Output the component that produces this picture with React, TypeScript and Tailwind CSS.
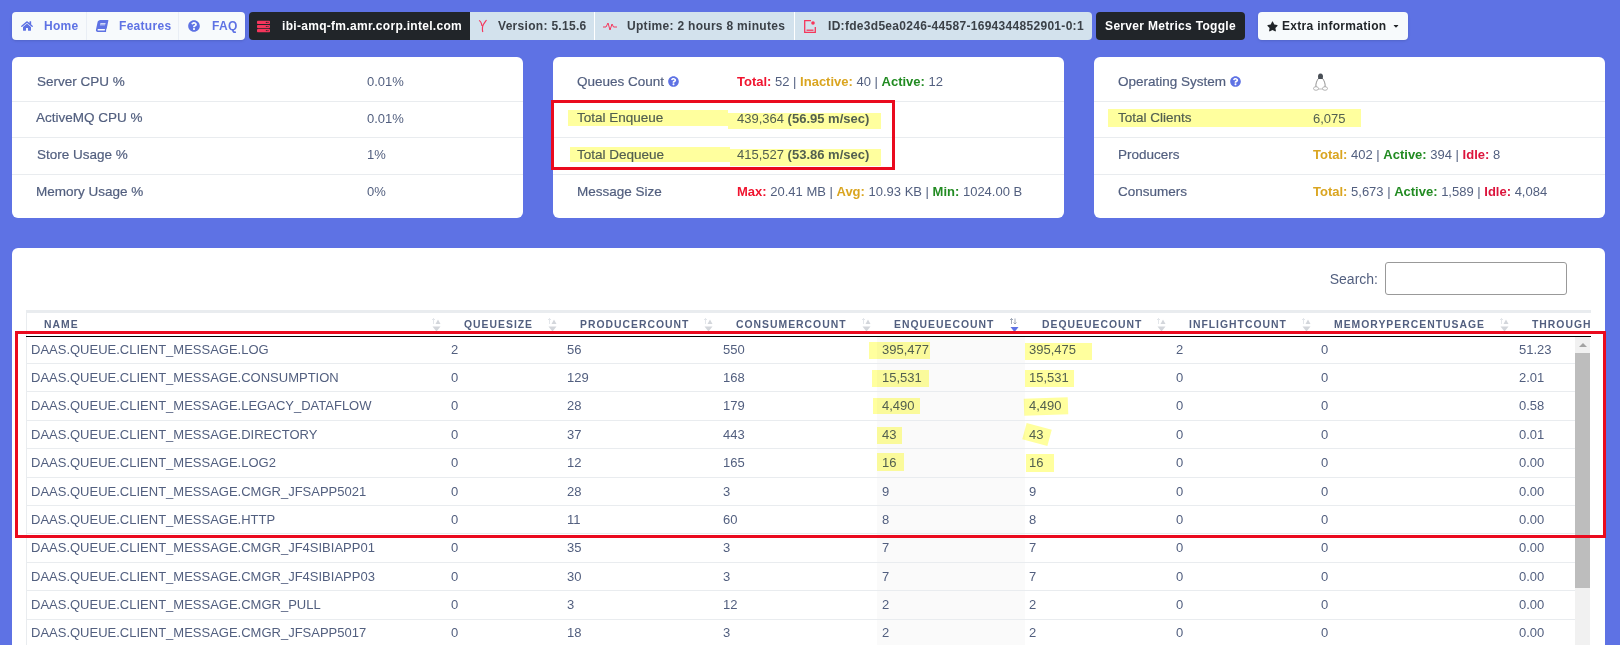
import { ReactNode } from 'react';
import { FaBook, FaCaretDown, FaHome, FaQuestionCircle, FaServer, FaStar } from 'react-icons/fa';

const headers = [
  'Name',
  'QueueSize',
  'ProducerCount',
  'ConsumerCount',
  'EnqueueCount',
  'DequeueCount',
  'InFlightCount',
  'MemoryPercentUsage',
  'Throughput',
];

const rows = [
  ['LOG', '2', '56', '550', '395,477', '395,475', '2', '0', '51.23'],
  ['CONSUMPTION', '0', '129', '168', '15,531', '15,531', '0', '0', '2.01'],
  ['LEGACY_DATAFLOW', '0', '28', '179', '4,490', '4,490', '0', '0', '0.58'],
  ['DIRECTORY', '0', '37', '443', '43', '43', '0', '0', '0.01'],
  ['LOG2', '0', '12', '165', '16', '16', '0', '0', '0.00'],
  ['CMGR_JFSAPP5021', '0', '28', '3', '9', '9', '0', '0', '0.00'],
  ['HTTP', '0', '11', '60', '8', '8', '0', '0', '0.00'],
  ['CMGR_JF4SIBIAPP01', '0', '35', '3', '7', '7', '0', '0', '0.00'],
  ['CMGR_JF4SIBIAPP03', '0', '30', '3', '7', '7', '0', '0', '0.00'],
  ['CMGR_PULL', '0', '3', '12', '2', '2', '0', '0', '0.00'],
  ['CMGR_JFSAPP5017', '0', '18', '3', '2', '2', '0', '0', '0.00'],
];

function SortIcon({ active }: { active?: boolean }) {
  const arrow = active ? '#8a94a6' : '#dcdfe4';
  return (
    <svg width="11" height="14" viewBox="0 0 11 14" className="shrink-0">
      <path d="M2.5 6V0.5M1 2L2.5 0.5L4 2" fill="none" stroke={arrow} strokeWidth="0.8" />
      {active ? (
        <>
          <path d="M6 0.5V6M4.5 4.5L6 6L7.5 4.5" fill="none" stroke={arrow} strokeWidth="0.8" />
          <path d="M1.5 9H9.5L5.5 14Z" fill="#5e72e4" />
        </>
      ) : (
        <>
          <path d="M7 1.5L9.5 6H4.5Z" fill="#d3d6db" />
          <path d="M1.5 8.5H9.5L5.5 13.5Z" fill="#d3d6db" />
        </>
      )}
    </svg>
  );
}

function Row({ label, children, labelClass }: { label: ReactNode; children: ReactNode; labelClass: string }) {
  return (
    <div className="flex h-[36.5px] items-center border-b border-[#e9ecef] pb-[2px] last:border-b-0">
      <div className={labelClass}>{label}</div>
      <div className="whitespace-nowrap">{children}</div>
    </div>
  );
}

function Help() {
  return <FaQuestionCircle className="ml-[4px] inline-block h-[11px] w-[11px] align-[-1px] text-[#5e72e4]" />;
}

function Tux() {
  return (
    <svg width="15" height="19" viewBox="0 0 15 19" className="mt-[1px]">
      <path d="M7.5 0.5C5.5 0.5 5 2 5 3.5C5 4.5 5.5 5 5 6H10C9.5 5 10 4.5 10 3.5C10 2 9.5 0.5 7.5 0.5Z" fill="#4a4f57" />
      <path d="M5 6C3.5 8.5 2.5 11 3 14M10 6C11.5 8.5 12.5 11 12 14" fill="none" stroke="#777" strokeWidth="0.8" />
      <path d="M4 16H11" stroke="#aaa" strokeWidth="0.8" />
      <ellipse cx="3" cy="15.5" rx="2.5" ry="1.8" fill="#fff" stroke="#999" strokeWidth="0.7" />
      <ellipse cx="12" cy="15.5" rx="2.5" ry="1.8" fill="#fff" stroke="#999" strokeWidth="0.7" />
    </svg>
  );
}

export default function App() {
  return (
    <div className="relative h-[645px] w-[1620px] overflow-hidden bg-[#5e72e4] text-[13px] text-[#525f7f] [font-family:'Liberation_Sans',Arial,sans-serif]">
      {/* top nav */}
      <nav className="mt-3 flex h-[28px] pl-3 text-xs font-bold tracking-[0.3px]">
        <div className="flex w-[233px] overflow-hidden rounded-[4px] bg-[#f7fafc] text-[#5e72e4] shadow-sm">
          <a className="flex w-[75px] items-center border-r border-[#e9eef5] pl-[9px]">
            <FaHome className="h-[12px] w-[12px]" />
            <span className="ml-[11px]">Home</span>
          </a>
          <a className="flex w-[92px] items-center border-r border-[#e9eef5] pl-[9px]">
            <FaBook className="h-[12px] w-[12px] -skew-x-12" />
            <span className="ml-[11px]">Features</span>
          </a>
          <a className="flex flex-1 items-center pl-[9px]">
            <FaQuestionCircle className="h-[12px] w-[12px]" />
            <span className="ml-[12px]">FAQ</span>
          </a>
        </div>
        <div className="ml-[4px] flex w-[221px] items-center rounded-l-[4px] bg-[#212529] pl-[8px] text-white">
          <FaServer className="h-[13px] w-[13px] text-[#f5365c]" />
          <span className="ml-[12px] whitespace-nowrap">ibi-amq-fm.amr.corp.intel.com</span>
        </div>
        <div className="flex w-[622px] rounded-r-[4px] bg-[#d3e2ed] font-normal text-[#343a40] [&>div]:border-r [&>div]:border-white">
          <div className="flex w-[125px] items-center pl-[8px]">
            <svg width="10" height="14" viewBox="0 0 10 14" fill="none" stroke="#f5365c" strokeWidth="1.2">
              <path d="M1 1.5C2.5 2 3.5 4 4 7M8.5 1C7 3 5 5 4.5 8C4.3 10 4.5 12 4.8 13" />
            </svg>
            <span className="ml-[10px] font-bold text-[#3b4148]">Version: 5.15.6</span>
          </div>
          <div className="flex w-[200px] items-center pl-[8px]">
            <svg width="14" height="10" viewBox="0 0 14 10" fill="none" stroke="#f5365c" strokeWidth="1">
              <path d="M0 6H3L5 2L7 9L9 3L10.5 6H14" />
            </svg>
            <span className="ml-[10px] font-bold text-[#3b4148]">Uptime: 2 hours 8 minutes</span>
          </div>
          <div className="flex flex-1 items-center !border-r-0 pl-[9px]">
            <svg width="12" height="13" viewBox="0 0 12 13" fill="none" stroke="#f5365c" strokeWidth="1.3">
              <path d="M7 0.7H0.7V12.3H11.3V7" />
              <path d="M2.5 10.2H9.5" />
              <circle cx="9" cy="3" r="1.8" fill="#f5365c" stroke="none" />
            </svg>
            <span className="ml-[12px] whitespace-nowrap font-bold text-[#3b4148]">ID:fde3d5ea0246-44587-1694344852901-0:1</span>
          </div>
        </div>
        <button className="ml-[4px] w-[149px] rounded-[4px] bg-[#212529] text-white">Server Metrics Toggle</button>
        <button className="ml-[13px] flex w-[150px] items-center rounded-[4px] bg-[#f7fafc] pl-[9px] text-[#212529] shadow-sm">
          <FaStar className="h-[11px] w-[11px]" />
          <span className="ml-[4px]">Extra information</span>
          <FaCaretDown className="ml-[6px] h-[8px] w-[8px]" />
        </button>
      </nav>

      {/* metric cards */}
      <div className="ml-3 mt-[17px] flex w-[1593px] justify-between">
        <div className="h-[161px] w-[511px] rounded-md bg-white pt-[8px]">
          <Row label="Server CPU %" labelClass="w-[355px] pl-[25px] text-[13.5px] [-webkit-text-stroke:0.2px]">0.01%</Row>
          <Row label="ActiveMQ CPU %" labelClass="w-[355px] pl-[24px] text-[13.5px] [-webkit-text-stroke:0.2px]">0.01%</Row>
          <Row label="Store Usage %" labelClass="w-[355px] pl-[25px] text-[13.5px] [-webkit-text-stroke:0.2px]">1%</Row>
          <Row label="Memory Usage %" labelClass="w-[355px] pl-[24px] text-[13.5px] [-webkit-text-stroke:0.2px]">0%</Row>
        </div>
        <div className="h-[161px] w-[511px] rounded-md bg-white pt-[8px]">
          <Row label={<>Queues Count<Help /></>} labelClass="w-[184px] pl-[24px] text-[13.5px] [-webkit-text-stroke:0.2px]">
            <b className="text-[#f0142f]">Total:</b> 52 | <b className="text-[#daa520]">Inactive:</b> 40 | <b className="text-[#228b22]">Active:</b> 12
          </Row>
          <Row label="Total Enqueue" labelClass="w-[184px] pl-[24px] text-[13.5px] [-webkit-text-stroke:0.2px]">
            439,364 <b>(56.95 m/sec)</b>
          </Row>
          <Row label="Total Dequeue" labelClass="w-[184px] pl-[24px] text-[13.5px] [-webkit-text-stroke:0.2px]">
            415,527 <b>(53.86 m/sec)</b>
          </Row>
          <Row label="Message Size" labelClass="w-[184px] pl-[24px] text-[13.5px] [-webkit-text-stroke:0.2px]">
            <b className="text-[#f0142f]">Max:</b> 20.41 MB | <b className="text-[#daa520]">Avg:</b> 10.93 KB | <b className="text-[#228b22]">Min:</b> 1024.00 B
          </Row>
        </div>
        <div className="h-[161px] w-[511px] rounded-md bg-white pt-[8px]">
          <Row label={<>Operating System<Help /></>} labelClass="w-[219px] pl-[24px] text-[13.5px] [-webkit-text-stroke:0.2px]">
            <Tux />
          </Row>
          <Row label="Total Clients" labelClass="w-[219px] pl-[24px] text-[13.5px] [-webkit-text-stroke:0.2px]">6,075</Row>
          <Row label="Producers" labelClass="w-[219px] pl-[24px] text-[13.5px] [-webkit-text-stroke:0.2px]">
            <b className="text-[#daa520]">Total:</b> 402 | <b className="text-[#228b22]">Active:</b> 394 | <b className="text-[#dc143c]">Idle:</b> 8
          </Row>
          <Row label="Consumers" labelClass="w-[219px] pl-[24px] text-[13.5px] [-webkit-text-stroke:0.2px]">
            <b className="text-[#daa520]">Total:</b> 5,673 | <b className="text-[#228b22]">Active:</b> 1,589 | <b className="text-[#dc143c]">Idle:</b> 4,084
          </Row>
        </div>
      </div>

      {/* queue table */}
      <div className="ml-3 mt-[30px] h-[420px] w-[1593px] rounded-t-md bg-white px-[14px] pt-[14px]">
        <div className="flex h-[33px] items-center justify-end pr-[24px]">
          <label className="text-sm">Search:</label>
          <input className="ml-[7px] h-[33px] w-[182px] rounded-[3px] border border-[#999]" />
        </div>
        <div className="mt-[15px] -mb-px grid h-[27px] grid-cols-[420px_116px_156px_158px_148px_147px_145px_198px_77px] border-t-[3px] border-l border-[#e9ecef]">
          {headers.map((h, i) => (
            <div key={h} className="flex items-center justify-between overflow-hidden pl-[17px] pr-[5px] text-[10.4px] font-bold uppercase tracking-[1px]">
              <span className="whitespace-nowrap">{h}</span>
              {i < 8 && <SortIcon active={i === 4} />}
            </div>
          ))}
        </div>
        <div className="border-t border-black" />
        <div className="flex border-l border-[#e9ecef]">
          <div className="w-[1548px]">
            {rows.map((r) => (
              <div
                key={r[0]}
                className="grid h-[28.4px] grid-cols-[420px_116px_156px_158px_148px_147px_145px_198px_61px] items-stretch border-b border-[#e9ecef] first:h-[27px]"
              >
                {r.map((c, i) => (
                  <div key={i} className={i === 4 ? 'flex items-center bg-[#fafafa] pl-[5px]' : 'flex items-center pl-[4px]'}>
                    {i === 0 ? 'DAAS.QUEUE.CLIENT_MESSAGE.' + c : c}
                  </div>
                ))}
              </div>
            ))}
          </div>
          <div className="h-[310px] w-[15px] bg-[#f1f1f1]">
            <div className="flex h-[16px] items-center justify-center">
              <div className="h-0 w-0 border-x-[4px] border-b-[4px] border-x-transparent border-b-[#a3a3a3]" />
            </div>
            <div className="h-[235px] bg-[#bdbdbd]" />
          </div>
        </div>
      </div>

      {/* hand-drawn highlighter marks over the screenshot */}
      <div className="absolute left-[568px] top-[110px] h-[16px] w-[160px] bg-[#ffff9e] mix-blend-multiply" />
      <div className="absolute left-[728px] top-[113px] h-[16px] w-[153px] bg-[#ffff9e] mix-blend-multiply" />
      <div className="absolute left-[570px] top-[147px] h-[15px] w-[160px] bg-[#ffff9e] mix-blend-multiply" />
      <div className="absolute left-[730px] top-[149px] h-[17px] w-[151px] bg-[#ffff9e] mix-blend-multiply" />
      <div className="absolute left-[1108px] top-[109px] h-[18px] w-[253px] bg-[#ffff9e] mix-blend-multiply" />
      <div className="absolute left-[869px] top-[342px] h-[17px] w-[61px] bg-[#ffff9e] mix-blend-multiply" />
      <div className="absolute left-[1025px] top-[343px] h-[17px] w-[67px] bg-[#ffff9e] mix-blend-multiply" />
      <div className="absolute left-[872px] top-[370px] h-[17px] w-[57px] bg-[#ffff9e] mix-blend-multiply" />
      <div className="absolute left-[1025px] top-[370px] h-[17px] w-[49px] bg-[#ffff9e] mix-blend-multiply" />
      <div className="absolute left-[873px] top-[398px] h-[16px] w-[47px] bg-[#ffff9e] mix-blend-multiply" />
      <div className="absolute left-[1024px] top-[398px] h-[17px] w-[44px] -rotate-2 bg-[#ffff9e] mix-blend-multiply" />
      <div className="absolute left-[877px] top-[427px] h-[17px] w-[25px] bg-[#ffff9e] mix-blend-multiply" />
      <div className="absolute left-[1024px] top-[426px] h-[17px] w-[26px] rotate-[15deg] bg-[#ffff9e] mix-blend-multiply" />
      <div className="absolute left-[877px] top-[453px] h-[18px] w-[27px] bg-[#ffff9e] mix-blend-multiply" />
      <div className="absolute left-[1026px] top-[454px] h-[18px] w-[28px] bg-[#ffff9e] mix-blend-multiply" />

      {/* red annotation boxes */}
      <div className="absolute left-[551px] top-[100px] h-[70px] w-[344px] border-[3px] border-[#ea0a1e]" />
      <div className="absolute left-[15px] top-[331px] h-[207px] w-[1591px] border-[3px] border-[#ea0a1e]" />
    </div>
  );
}
